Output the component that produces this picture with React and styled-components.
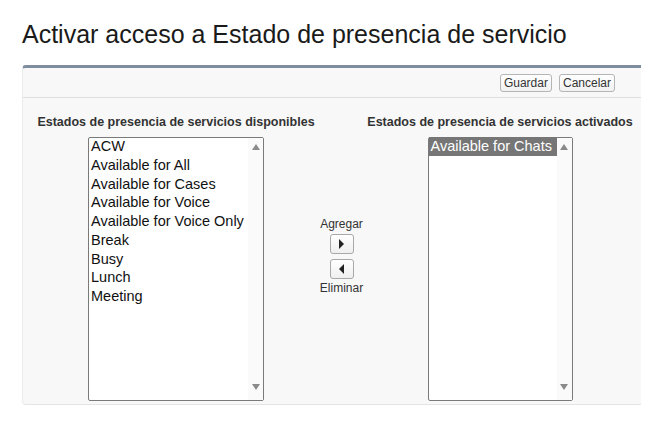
import React from "react";
import styled, { createGlobalStyle } from "styled-components";

const GlobalStyle = createGlobalStyle`
  body {
    margin: 0;
    background: #ffffff;
    font-family: Arial, "Liberation Sans", sans-serif;
  }
`;

const Page = styled.div`
  padding: 20px 13px 0 22px;
`;

const Title = styled.h1`
  margin: 0 0 16px;
  font-size: 25px;
  font-weight: normal;
  line-height: 29px;
  color: #1a1a1a;
`;

const Panel = styled.div`
  width: 618px;
  background: #f8f8f8;
  border-top: 3px solid #7f8da0;
  border-bottom: 1px solid #e4e4e4;
  border-left: 1px solid #ececec;
  border-radius: 4px 0 0 4px;
`;

const ButtonBar = styled.div`
  display: flex;
  justify-content: flex-end;
  gap: 7px;
  height: 29px;
  align-items: center;
  padding-right: 26px;
  border-bottom: 1px solid #dedede;
`;

const Btn = styled.button`
  font-family: Arial, "Liberation Sans", sans-serif;
  font-size: 12px;
  color: #333;
  height: 18px;
  padding: 0 3px;
  border: 1px solid #b5b5b5;
  border-radius: 3px;
  background: linear-gradient(#ffffff, #f1f1f1);
  line-height: 16px;
`;

const Columns = styled.div`
  display: grid;
  grid-template-columns: 300px 31px 286px;
  padding: 16px 0 3px 3px;
`;

const Column = styled.div`
  display: flex;
  flex-direction: column;
  align-items: center;
`;

const Label = styled.div`
  font-size: 12.5px;
  font-weight: bold;
  color: #333;
  white-space: nowrap;
  line-height: 16px;
  margin-bottom: 7px;
`;

const ListBox = styled.div`
  display: flex;
  width: ${(p) => p.$width}px;
  height: 264px;
  background: #ffffff;
  border: 1px solid #7a7a7a;
  border-radius: 2px;
  box-sizing: border-box;
`;

const Options = styled.div`
  flex: 1;
  min-width: 0;
  margin-top: -1px;
`;

const Option = styled.div`
  font-size: 14.5px;
  line-height: 18.75px;
  padding-left: 2px;
  color: ${(p) => (p.$selected ? "#fff" : "#111")};
  background: ${(p) => (p.$selected ? "#767676" : "transparent")};
  white-space: nowrap;
`;

const Scrollbar = styled.div`
  width: 15px;
  background: #fafafa;
  display: flex;
  flex-direction: column;
  justify-content: space-between;
  align-items: center;
  padding: 6px 0 10px;
`;

const Arrow = styled.span`
  width: 0;
  height: 0;
  border-left: 4.5px solid transparent;
  border-right: 4.5px solid transparent;
  ${(p) =>
    p.$down
      ? "border-top: 6px solid #8a8a8a;"
      : "border-bottom: 6px solid #8a8a8a;"}
`;

const Mover = styled.div`
  display: flex;
  flex-direction: column;
  align-items: center;
  padding-top: 103px;
  font-size: 12px;
  color: #333;
  line-height: 14px;
`;

const MoveBtn = styled.button`
  width: 24px;
  height: 20px;
  margin: 3px 0 2px;
  padding: 0;
  border: 1px solid #a8a8a8;
  border-radius: 3px;
  background: linear-gradient(#ffffff, #efefef);
  display: flex;
  align-items: center;
  justify-content: center;
`;

const Tri = styled.span`
  width: 0;
  height: 0;
  border-top: 5px solid transparent;
  border-bottom: 5px solid transparent;
  ${(p) =>
    p.$left
      ? "border-right: 5px solid #222;"
      : "border-left: 5px solid #222;"}
`;

const available = [
  "ACW",
  "Available for All",
  "Available for Cases",
  "Available for Voice",
  "Available for Voice Only",
  "Break",
  "Busy",
  "Lunch",
  "Meeting",
];

const List = ({ items, width, selected }) => (
  <ListBox $width={width}>
    <Options>
      {items.map((item) => (
        <Option key={item} $selected={selected === item}>
          {item}
        </Option>
      ))}
    </Options>
    <Scrollbar>
      <Arrow />
      <Arrow $down />
    </Scrollbar>
  </ListBox>
);

export default function App() {
  return (
    <>
      <GlobalStyle />
      <Page>
        <Title>Activar acceso a Estado de presencia de servicio</Title>
        <Panel>
          <ButtonBar>
            <Btn>Guardar</Btn>
            <Btn>Cancelar</Btn>
          </ButtonBar>
          <Columns>
            <Column>
              <Label>Estados de presencia de servicios disponibles</Label>
              <List items={available} width={176} />
            </Column>
            <Mover>
              Agregar
              <MoveBtn>
                <Tri />
              </MoveBtn>
              <MoveBtn>
                <Tri $left />
              </MoveBtn>
              Eliminar
            </Mover>
            <Column>
              <Label>Estados de presencia de servicios activados</Label>
              <List
                items={["Available for Chats"]}
                width={145}
                selected="Available for Chats"
              />
            </Column>
          </Columns>
        </Panel>
      </Page>
    </>
  );
}
